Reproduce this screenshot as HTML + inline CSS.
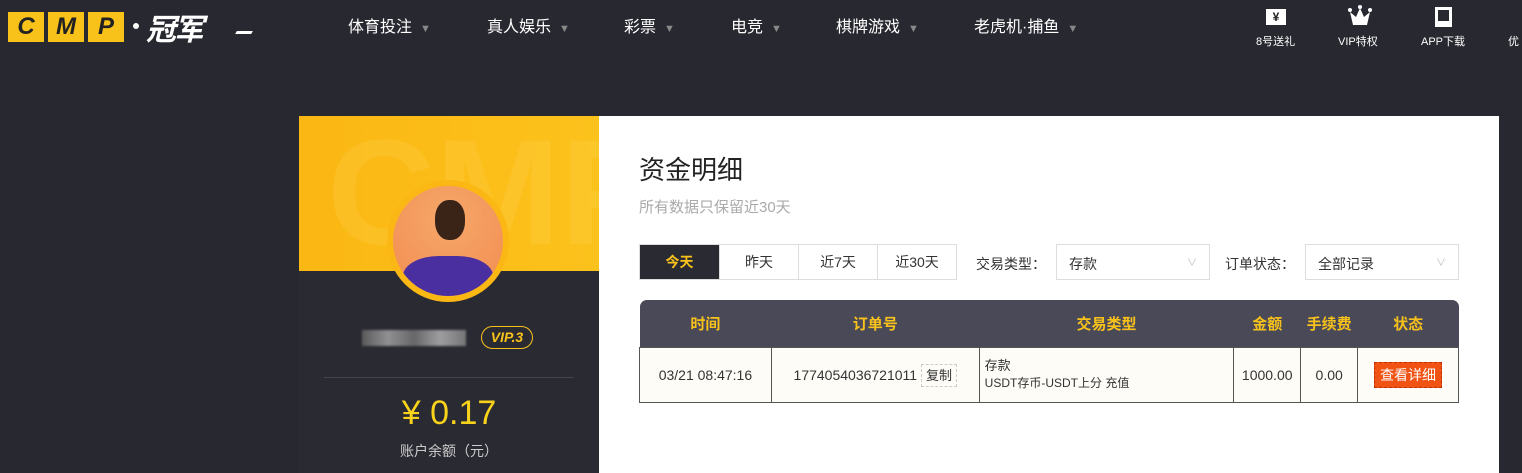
<!DOCTYPE html><html><head><meta charset="utf-8"><style>
*{margin:0;padding:0;box-sizing:border-box}
body{width:1522px;height:473px;overflow:hidden;background:#282830;font-family:"Liberation Sans","Noto Sans CJK SC",sans-serif;position:relative}
.a{position:absolute}
.nav{color:#fff;font-size:16px;top:13px}
.nav span{color:#888;font-size:11px;margin-left:8px}
.ic{color:#fff;font-size:11px;text-align:center;top:33px}
td,th{font-weight:normal}
</style></head><body>
<div class="a" style="left:8px;top:12px;display:flex;gap:4px">
<div style="width:36px;height:30px;background:#f8c21b;color:#222;font:italic bold 24px 'Liberation Sans';text-align:center;line-height:30px">C</div>
<div style="width:36px;height:30px;background:#f8c21b;color:#222;font:italic bold 24px 'Liberation Sans';text-align:center;line-height:30px">M</div>
<div style="width:36px;height:30px;background:#f8c21b;color:#222;font:italic bold 24px 'Liberation Sans';text-align:center;line-height:30px">P</div>
</div>
<div class="a" style="left:133px;top:23px;width:6px;height:6px;background:#fff;border-radius:50%"></div>
<div class="a" style="left:146px;top:5px;color:#fff;font:italic bold 30px 'Noto Sans CJK SC',sans-serif;letter-spacing:-2px">冠军</div>
<div class="a" style="left:236px;top:31px;width:16px;height:3px;background:#fff;transform:skewX(-30deg)"></div>
<div class="a nav" style="left:348px">体育投注<span>▼</span></div>
<div class="a nav" style="left:487px">真人娱乐<span>▼</span></div>
<div class="a nav" style="left:624px">彩票<span>▼</span></div>
<div class="a nav" style="left:731px">电竞<span>▼</span></div>
<div class="a nav" style="left:836px">棋牌游戏<span>▼</span></div>
<div class="a nav" style="left:974px">老虎机·捕鱼<span>▼</span></div>
<div class="a" style="left:1266px;top:9px;width:20px;height:16px;background:#fff;color:#222;font-size:12px;text-align:center;line-height:16px;font-weight:bold">¥</div>
<svg class="a" style="left:1347px;top:4px" width="26" height="22"><circle cx="3" cy="6" r="2" fill="#fff"/><circle cx="13" cy="3" r="2" fill="#fff"/><circle cx="23" cy="6" r="2" fill="#fff"/><path d="M3 8l6 5 4-9 4 9 6-5-3 13H6z" fill="#fff"/></svg>
<div class="a" style="left:1435px;top:7px;width:17px;height:20px;border:3px solid #fff;border-bottom-width:6px"></div>
<div class="a ic" style="left:1256px">8号送礼</div>
<div class="a ic" style="left:1338px">VIP特权</div>
<div class="a ic" style="left:1421px">APP下载</div>
<div class="a ic" style="left:1508px">优</div>

<div class="a" style="left:299px;top:116px;width:300px;height:357px;background:#2a2a33"></div>
<div class="a" style="left:299px;top:116px;width:300px;height:155px;background:linear-gradient(90deg,#fbb714,#fcc21c);overflow:hidden">
<div style="position:absolute;left:28px;top:-10px;font:bold 150px 'Liberation Sans';color:rgba(255,230,120,.15)">CMP</div></div>
<div class="a" style="left:387px;top:180px;width:122px;height:122px;border-radius:50%;background:#fbb714;padding:6px">
<div style="width:110px;height:110px;border-radius:50%;background:radial-gradient(circle at 50% 30%,#f6a86a,#f28a50);overflow:hidden;position:relative">
<div style="position:absolute;left:42px;top:14px;width:30px;height:40px;border-radius:45%;background:#3a2418"></div>
<div style="position:absolute;left:10px;top:70px;width:90px;height:50px;border-radius:40% 40% 0 0;background:#4a2fa0"></div></div></div>
<div class="a" style="left:362px;top:330px;width:104px;height:16px;background:linear-gradient(90deg,#666,#aaa,#777,#bbb,#888);filter:blur(1px);opacity:.8"></div>
<div class="a" style="left:481px;top:326px;width:52px;height:23px;border:1.5px solid #f8c21b;border-radius:12px;color:#f8c21b;font:italic bold 14px 'Liberation Sans';text-align:center;line-height:20px">VIP.3</div>
<div class="a" style="left:324px;top:377px;width:250px;height:1px;background:#44444d"></div>
<div class="a" style="left:299px;top:394px;width:300px;text-align:center;color:#f8d21b;font-size:34px">¥ 0.17</div>
<div class="a" style="left:299px;top:441px;width:300px;text-align:center;color:#ccc;font-size:14px">账户余额（元）</div>

<div class="a" style="left:599px;top:116px;width:900px;height:357px;background:#fff"></div>
<div class="a" style="left:639px;top:150px;font-size:26px;color:#222">资金明细</div>
<div class="a" style="left:639px;top:196px;font-size:15px;color:#aaa">所有数据只保留近30天</div>
<div class="a" style="left:639px;top:244px;display:flex;border:1px solid #ddd;height:36px;font-size:14px;color:#333">
<div style="width:79px;background:#2a2a33;color:#f8c21b;font-weight:bold;text-align:center;line-height:34px">今天</div>
<div style="width:79px;border-left:1px solid #ddd;text-align:center;line-height:34px">昨天</div>
<div style="width:79px;border-left:1px solid #ddd;text-align:center;line-height:34px">近7天</div>
<div style="width:79px;border-left:1px solid #ddd;text-align:center;line-height:34px">近30天</div></div>
<div class="a" style="left:976px;top:254px;font-size:14px;color:#333">交易类型：</div>
<div class="a" style="left:1056px;top:244px;width:154px;height:36px;border:1px solid #ddd;font-size:14px;color:#333;padding:9px 12px">存款<span style="float:right;color:#bbb;font-size:10px">∨</span></div>
<div class="a" style="left:1225px;top:254px;font-size:14px;color:#333">订单状态：</div>
<div class="a" style="left:1305px;top:244px;width:154px;height:36px;border:1px solid #ddd;font-size:14px;color:#333;padding:9px 12px">全部记录<span style="float:right;color:#bbb;font-size:10px">∨</span></div>

<table class="a" style="left:639px;top:300px;width:820px;border-collapse:collapse;font-size:14px;color:#333">
<tr style="background:#494958;color:#f8c21b;font-weight:bold;height:47px;font-size:15px">
<th style="width:132px;border-radius:7px 0 0 0;font-weight:bold">时间</th><th style="width:208px;font-weight:bold">订单号</th><th style="width:255px;font-weight:bold">交易类型</th><th style="width:67px;font-weight:bold">金额</th><th style="width:57px;font-weight:bold">手续费</th><th style="width:101px;border-radius:0 7px 0 0;font-weight:bold">状态</th></tr>
<tr style="background:#fdfcf7;height:55px">
<td style="border:1px solid #555;text-align:center">03/21 08:47:16</td>
<td style="border:1px solid #555;text-align:center">1774054036721011 <span style="border:1px dashed #ccc;padding:3px 4px;font-size:13px">复制</span></td>
<td style="border:1px solid #555;padding-left:5px;line-height:17px;font-size:13px">存款<br><span style="font-size:12px">USDT存币-USDT上分 充值</span></td>
<td style="border:1px solid #555;text-align:center">1000.00</td>
<td style="border:1px solid #555;text-align:center">0.00</td>
<td style="border:1px solid #555;text-align:center"><span style="background:#f05313;color:#fff;padding:4px 5px;border:1px dashed #c03000">查看详细</span></td></tr></table>
</body></html>
